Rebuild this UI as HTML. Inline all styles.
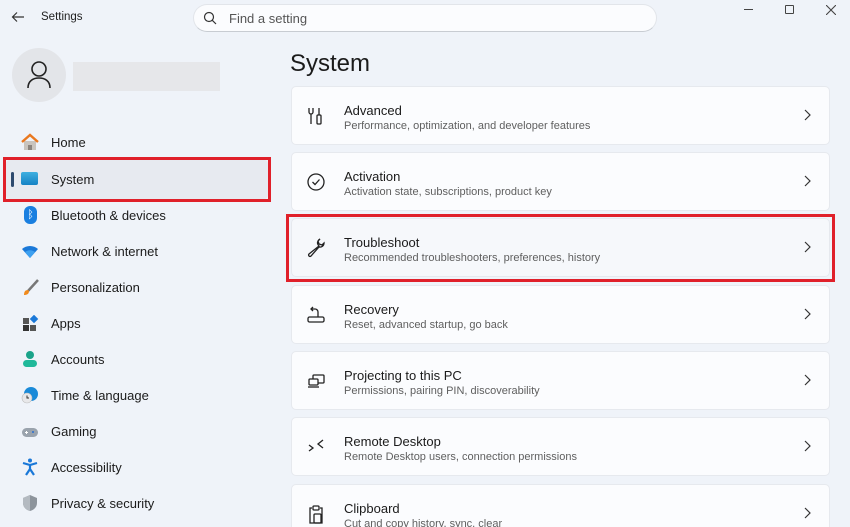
<!DOCTYPE html>
<html style="width:850px;height:527px;overflow:hidden"><head><meta charset="utf-8"><style>
*{box-sizing:border-box;margin:0;padding:0}
body{width:850px;height:527px;overflow:hidden;background:#eff3f9;font-family:"Liberation Sans",sans-serif;color:#1b1b1b;position:relative}
.a{position:absolute}
.nav{position:absolute;left:51px;font-size:13px;color:#1b1b1b}
.ni{position:absolute;left:21px;width:18px;height:18px}
.card{position:absolute;left:291px;width:539px;height:59px;background:#fbfcfe;border-radius:5px;border:1px solid #e6e9ee}
.card .t{position:absolute;left:52px;top:16px;font-size:13px;color:#1b1b1b}
.card .s{position:absolute;left:52px;top:33px;font-size:11px;color:#5f5f5f}
.card .ch{position:absolute;right:18px;top:22px;width:8px;height:12px}
.card svg.ic{position:absolute;left:14px;top:19px}
</style></head><body>
<svg class="a" style="left:11px;top:11px" width="14" height="12"><path d="M13 6H2M6 1.5L1.5 6 6 10.5" stroke="#333" stroke-width="1.2" fill="none"/></svg>
<div class="a" style="left:41px;top:11px;font-size:11.5px;color:#222">Settings</div>
<div class="a" style="left:193px;top:4px;width:464px;height:28px;background:#fbfcfe;border:1px solid #e2e5ea;border-bottom-color:#c8ccd2;border-radius:14px"></div>
<svg class="a" style="left:203px;top:11px" width="14" height="14"><circle cx="6" cy="6" r="4.5" stroke="#333" stroke-width="1.2" fill="none"/><path d="M9.3 9.3L13 13" stroke="#333" stroke-width="1.2"/></svg>
<div class="a" style="left:229px;top:11px;font-size:13px;color:#555">Find a setting</div>
<div class="a" style="left:744px;top:9px;width:9px;border-top:1px solid #444"></div>
<div class="a" style="left:785px;top:5px;width:9px;height:9px;border:1.2px solid #444;border-radius:1px"></div>
<svg class="a" style="left:826px;top:5px" width="10" height="10"><path d="M0 0L10 10M10 0L0 10" stroke="#444" stroke-width="1.1"/></svg>

<div class="a" style="left:12px;top:48px;width:54px;height:54px;border-radius:50%;background:#e3e5e9"></div>
<svg class="a" style="left:26px;top:60px" width="26" height="30"><circle cx="13" cy="9" r="7" stroke="#222" stroke-width="1.6" fill="none"/><path d="M2 28c0-7 5-10 11-10s11 3 11 10" stroke="#222" stroke-width="1.6" fill="none"/></svg>
<div class="a" style="left:73px;top:62px;width:147px;height:29px;background:#e6e7ea"></div>

<svg class="ni" style="top:133px" viewBox="0 0 18 18"><path d="M3 8v9h12V8" fill="#c9c4be"/><path d="M7 17v-5h4v5" fill="#8a847e"/><path d="M1 9L9 2l8 7" stroke="#e9781f" stroke-width="2.4" fill="none"/></svg>
<div class="nav" style="top:135px">Home</div>
<div class="a" style="left:6px;top:160px;width:262px;height:39px;background:#e7eaf0;border-radius:4px"></div>
<div class="a" style="left:11px;top:172px;width:3px;height:15px;background:#2d4a6e;border-radius:2px"></div>
<div class="a" style="left:21px;top:172px;width:17px;height:13px;background:linear-gradient(#3fb0e0,#1582c4);border-radius:2px"></div>
<div class="nav" style="top:172px">System</div>
<div class="a" style="left:3px;top:157px;width:268px;height:45px;border:3px solid #e0202a"></div>
<div class="a" style="left:24px;top:206px;width:13px;height:18px;background:#1a7fe0;border-radius:6px;color:#fff;font-size:11px;text-align:center;line-height:18px">ᛒ</div>
<div class="nav" style="top:208px">Bluetooth &amp; devices</div>
<svg class="ni" style="top:243px" viewBox="0 0 18 18"><path d="M1 6a12 12 0 0 1 16 0L9 15z" fill="#1a78d8"/><path d="M4 9a8 8 0 0 1 10 0L9 15z" fill="#3ea0f0"/></svg>
<div class="nav" style="top:244px">Network &amp; internet</div>
<svg class="ni" style="top:279px" viewBox="0 0 18 18"><path d="M17 1L7 12" stroke="#777" stroke-width="2.5"/><path d="M7 11c-3 0-4 2-4 5 3 0 5-1 5-4z" fill="#f08a1c"/></svg>
<div class="nav" style="top:280px">Personalization</div>
<svg class="ni" style="top:315px" viewBox="0 0 18 18"><rect x="2" y="3" width="6" height="6" fill="#555"/><rect x="2" y="10" width="6" height="6" fill="#333"/><rect x="9" y="10" width="6" height="6" fill="#555"/><rect x="10" y="1" width="6" height="6" fill="#1a78d8" transform="rotate(45 13 4)"/></svg>
<div class="nav" style="top:316px">Apps</div>
<svg class="ni" style="top:350px" viewBox="0 0 18 18"><circle cx="9" cy="5" r="4" fill="#1aa38a"/><rect x="2" y="10" width="14" height="7" rx="3.5" fill="#1fb89a"/></svg>
<div class="nav" style="top:352px">Accounts</div>
<svg class="ni" style="top:386px" viewBox="0 0 18 18"><circle cx="10" cy="8" r="7" fill="#1a8ad8"/><circle cx="6" cy="12" r="5" fill="#e8e8ea" stroke="#bbb" stroke-width=".6"/><path d="M6 9.5V12h2" stroke="#333" fill="none"/></svg>
<div class="nav" style="top:388px">Time &amp; language</div>
<svg class="ni" style="top:423px" viewBox="0 0 18 18"><rect x="1" y="5" width="16" height="9" rx="4.5" fill="#9aa3ad"/><path d="M4 9.5h3M5.5 8v3" stroke="#fff"/><circle cx="12" cy="9" r="1" fill="#2a6fd0"/></svg>
<div class="nav" style="top:424px">Gaming</div>
<svg class="ni" style="top:458px" viewBox="0 0 18 18"><circle cx="9" cy="2.5" r="2" fill="#1a78d8"/><path d="M2 5l7 2 7-2M9 7v4l-4 6M9 11l4 6" stroke="#1a78d8" stroke-width="2.2" fill="none"/></svg>
<div class="nav" style="top:460px">Accessibility</div>
<svg class="ni" style="top:494px" viewBox="0 0 18 18"><path d="M9 1l7 3v5c0 4-3 7-7 8-4-1-7-4-7-8V4z" fill="#8d949c"/><path d="M9 1v16c-4-1-7-4-7-8V4z" fill="#b4bac1"/></svg>
<div class="nav" style="top:496px">Privacy &amp; security</div>

<div class="a" style="left:290px;top:50px;font-size:24px;color:#1b1b1b">System</div>

<div class="card" style="top:86px"><svg class="ic" style="top:19px" width="20" height="20" viewBox="0 0 20 20" fill="none" stroke="#222" stroke-width="1.3"><path d="M3 2v4a2 2 0 0 0 4 0V2M5 8v10"/><rect x="11" y="9" width="4" height="9" rx="1"/><path d="M13 2v7"/></svg><div class="t">Advanced</div><div class="s">Performance, optimization, and developer features</div><svg class="ch" viewBox="0 0 8 12"><path d="M2 1l5 5-5 5" stroke="#333" stroke-width="1.2" fill="none"/></svg></div>
<div class="card" style="top:152px"><svg class="ic" width="20" height="20" viewBox="0 0 20 20" fill="none" stroke="#222" stroke-width="1.3"><circle cx="10" cy="10" r="8"/><path d="M6.5 10l2.5 2.5 4.5-5"/></svg><div class="t">Activation</div><div class="s">Activation state, subscriptions, product key</div><svg class="ch" viewBox="0 0 8 12"><path d="M2 1l5 5-5 5" stroke="#333" stroke-width="1.2" fill="none"/></svg></div>
<div class="card" style="top:218px;background:#f6f8fb"><svg class="ic" width="20" height="20" viewBox="0 0 20 20" fill="none" stroke="#222" stroke-width="1.3"><path d="M12 3a4 4 0 0 0 1 5L3 16a1.4 1.4 0 0 0 2 2l8-9a4 4 0 0 0 5-4l-2 2-3-1-1-3 2-2a4 4 0 0 0-2 2z"/></svg><div class="t">Troubleshoot</div><div class="s">Recommended troubleshooters, preferences, history</div><svg class="ch" viewBox="0 0 8 12"><path d="M2 1l5 5-5 5" stroke="#333" stroke-width="1.2" fill="none"/></svg></div>
<div class="a" style="left:286px;top:214px;width:549px;height:68px;border:3px solid #e0202a"></div>
<div class="card" style="top:285px"><svg class="ic" width="20" height="20" viewBox="0 0 20 20" fill="none" stroke="#222" stroke-width="1.3"><path d="M7 2L5 4l2 2M5 4h4a3 3 0 0 1 3 3v5"/><rect x="2" y="12" width="16" height="5" rx="1.5"/></svg><div class="t">Recovery</div><div class="s">Reset, advanced startup, go back</div><svg class="ch" viewBox="0 0 8 12"><path d="M2 1l5 5-5 5" stroke="#333" stroke-width="1.2" fill="none"/></svg></div>
<div class="card" style="top:351px"><svg class="ic" width="20" height="20" viewBox="0 0 20 20" fill="none" stroke="#222" stroke-width="1.3"><rect x="7" y="4" width="11" height="8" rx="1"/><rect x="3" y="8" width="9" height="6" rx="1" fill="#fbfcfe"/><path d="M2 16h11"/></svg><div class="t">Projecting to this PC</div><div class="s">Permissions, pairing PIN, discoverability</div><svg class="ch" viewBox="0 0 8 12"><path d="M2 1l5 5-5 5" stroke="#333" stroke-width="1.2" fill="none"/></svg></div>
<div class="card" style="top:417px"><svg class="ic" width="20" height="20" viewBox="0 0 20 20" fill="none" stroke="#222" stroke-width="1.3"><path d="M3 8l4 3-4 3M17 3l-5 4 5 4"/></svg><div class="t">Remote Desktop</div><div class="s">Remote Desktop users, connection permissions</div><svg class="ch" viewBox="0 0 8 12"><path d="M2 1l5 5-5 5" stroke="#333" stroke-width="1.2" fill="none"/></svg></div>
<div class="card" style="top:484px"><svg class="ic" width="20" height="20" viewBox="0 0 20 20" fill="none" stroke="#222" stroke-width="1.3"><path d="M6 4H4v15h12V4h-2"/><rect x="7" y="2" width="6" height="4" rx="1"/><rect x="8" y="10" width="7" height="9" rx="1"/></svg><div class="t">Clipboard</div><div class="s">Cut and copy history, sync, clear</div><svg class="ch" viewBox="0 0 8 12"><path d="M2 1l5 5-5 5" stroke="#333" stroke-width="1.2" fill="none"/></svg></div>
</body></html>
